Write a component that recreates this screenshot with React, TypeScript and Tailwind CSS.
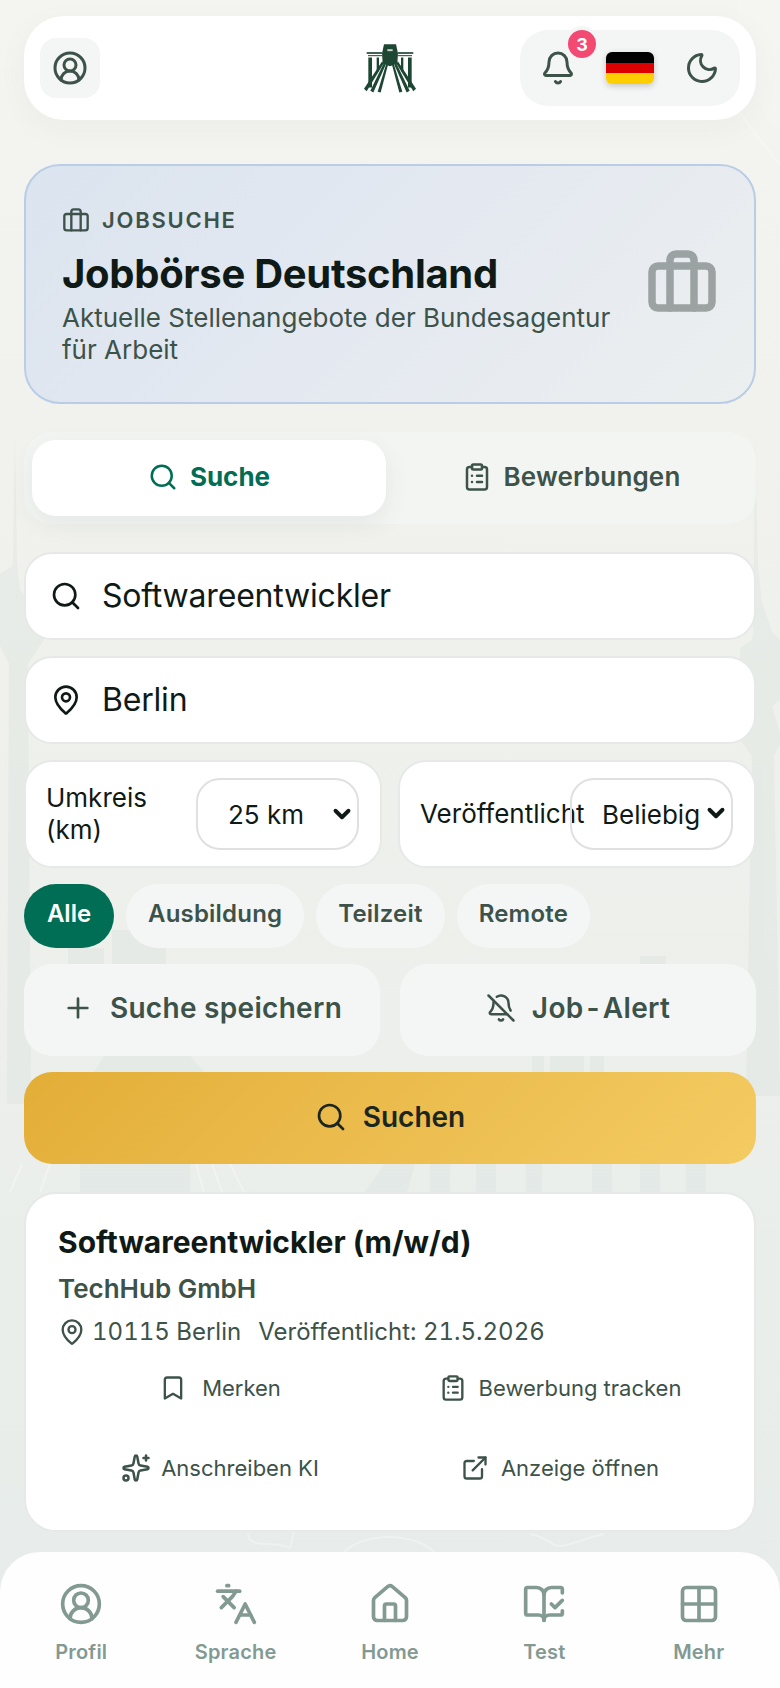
import React from "react";
import {
  Bell,
  BellOff,
  BookOpenCheck,
  Bookmark,
  Briefcase,
  ChevronDown,
  CircleUserRound,
  ClipboardList,
  ExternalLink,
  Grid2x2,
  House,
  Languages,
  MapPin,
  Moon,
  Plus,
  Search,
  Sparkles,
} from "lucide-react";

const navItems = [
  { label: "Profil", icon: CircleUserRound },
  { label: "Sprache", icon: Languages },
  { label: "Home", icon: House },
  { label: "Test", icon: BookOpenCheck },
  { label: "Mehr", icon: Grid2x2 },
];

const chips = ["Ausbildung", "Teilzeit", "Remote"];

function LogoHalf() {
  return (
    <>
      <rect x="8" y="24" width="46" height="5" />
      <rect x="12" y="33" width="42" height="3" />
      <rect x="13" y="40" width="11" height="90" />
      <rect x="38" y="40" width="7" height="42" />
      <path d="M54 52 L59 58 L8 141 L0 134 Z" />
      <path d="M60 56 L65 62 L28 145 L19 140 Z" />
      <path d="M67 58 L73 58 L50 145 L41 143 Z" />
    </>
  );
}

function Logo() {
  return (
    <svg viewBox="0 0 156 146" className="w-[52px] h-[49px]" fill="#1d4633">
      <path d="M60 0H96L102 28L100 58L78 66L56 58L54 28Z" />
      <rect x="70" y="15" width="16" height="6" fill="#ffffff" opacity="0.75" />
      <LogoHalf />
      <g transform="matrix(-1 0 0 1 156 0)">
        <LogoHalf />
      </g>
    </svg>
  );
}

// Faint city scene behind the page
function Skyline() {
  return (
    <svg viewBox="0 0 780 1688" className="absolute inset-0 w-full h-full">
      <g fill="#dbe3df" opacity="0.4">
        <path d="M15 432l2 130 3 28 27 24 3 16-22 34 3 440h-24l2-440-9-18v-72l12-8 1-4z" />
        <path d="M755 436l3 130 4 36 10 30 8 8v60l-8 6 10 34-8 16 6 340h-34l6-340-12-16 4-34-4-6v-52l12-8 1-8z" />
        <rect x="68" y="948" width="36" height="16" />
        <rect x="112" y="930" width="54" height="34" />
        <rect x="640" y="956" width="26" height="8" />
        <path d="M532 1056h12v16h-12zM550 1056h34v16h-34zM590 1056h14v16h-14z" />
        <path d="M104 1056h86l14 16h-110z" />
        <rect x="80" y="1164" width="110" height="28" />
        <path d="M365 1192l20-28h30l-8 28z" />
        <rect x="430" y="1164" width="20" height="28" />
        <rect x="476" y="1164" width="20" height="28" />
        <rect x="526" y="1164" width="16" height="28" />
        <rect x="592" y="1164" width="20" height="28" />
        <rect x="640" y="1164" width="20" height="28" />
        <rect x="686" y="1164" width="20" height="28" />
      </g>
      <g stroke="#ffffff" fill="none" strokeWidth="2" opacity="0.3">
        <path d="M720 80c16 30 40 60 60 85" />
        <path d="M10 1192l12-28M40 1192l10-28M204 1192l-8-28M222 1192l-10-28M244 1192l-14-28" />
        <path d="M344 1552c20-20 70-20 90 0" />
        <path d="M248 1534c0 16 30 6 42 14 2-6 2-14 6-18" />
        <path d="M530 1534c20 4 20 12 30 12s30-10 44-12" />
      </g>
      <path d="M738 0c-4 60 8 90 42 132V0z" fill="#ffffff" opacity="0.12" />
    </svg>
  );
}

export default function App() {
  return (
    <div className="relative w-[780px] h-[1688px] overflow-hidden bg-gradient-to-b from-[#f4f4f0] via-[#eef0ec] to-[#e6ecea] font-['Inter',sans-serif] text-[#0f1a16]">
      <Skyline />

      <div className="relative flex flex-col px-6 pt-4">
        {/* Header */}
        <header className="flex items-center h-[104px] bg-white rounded-[40px] px-4 shadow-[0_8px_32px_rgba(60,80,70,0.04)]">
          <button
            type="button"
            className="flex items-center justify-center w-[60px] h-[60px] rounded-2xl bg-[#f4f6f5] text-[#3d5249]"
          >
            <CircleUserRound size={36} strokeWidth={2} />
          </button>
          <div className="ml-[264px]">
            <Logo />
          </div>
          <div className="flex items-center gap-[30px] ml-auto h-[76px] rounded-[28px] bg-[#f4f6f5] px-5 text-[#3d5249]">
            <div className="relative">
              <Bell size={36} strokeWidth={2} />
              <span className="absolute -top-[20px] -right-[20px] flex items-center justify-center w-[28px] h-[28px] rounded-full bg-[#f24a72] text-white text-[18px] font-bold shadow-[0_0_0_4px_#f4f6f5]">
                3
              </span>
            </div>
            <div className="flex flex-col w-[48px] h-[32px] rounded-md overflow-hidden shadow-[0_2px_6px_rgba(0,0,0,0.2)]">
              <div className="flex-1 bg-black" />
              <div className="flex-1 bg-[#dd0000]" />
              <div className="flex-1 bg-[#ffce00]" />
            </div>
            <Moon size={36} strokeWidth={2} />
          </div>
        </header>

        {/* Hero */}
        <section className="flex items-center justify-between mt-11 h-[240px] rounded-[36px] border-2 border-[#b9cde6] bg-linear-135 from-[#dbe4ef] via-[#e4e9f1] to-[#ecefef] px-[36px]">
          <div className="w-[552px] pt-[2px]">
            <div className="flex items-center gap-3 text-[#3d5249]">
              <Briefcase size={28} strokeWidth={2} />
              <span className="text-[22px] font-semibold tracking-[1.76px]">JOBSUCHE</span>
            </div>
            <h1 className="mt-[13px] text-[40px] leading-[48px] font-bold tracking-[-0.3px] text-[#0f1a16]">
              Jobbörse Deutschland
            </h1>
            <p className="mt-[4px] text-[26px] leading-[32px] text-[#3d5249]">
              Aktuelle Stellenangebote der Bundesagentur für Arbeit
            </p>
          </div>
          <Briefcase size={72} strokeWidth={2.5} className="text-[#0f1a16] opacity-35" />
        </section>

        {/* Tabs */}
        <div className="flex gap-2 mt-[28px] h-[92px] rounded-[28px] bg-[#f4f6f5]/70 p-2">
          <button
            type="button"
            className="flex items-center justify-center gap-3 w-[354px] pb-[3px] rounded-[24px] bg-white text-[#006e54] text-[26px] font-bold shadow-[0_8px_24px_rgba(60,80,70,0.08)]"
          >
            <Search size={30} strokeWidth={2} />
            Suche
          </button>
          <button
            type="button"
            className="flex flex-1 items-center justify-center gap-3 pb-[3px] text-[#3d5249] text-[26px] font-semibold tracking-[0.15px]"
          >
            <ClipboardList size={30} strokeWidth={2} />
            Bewerbungen
          </button>
        </div>

        {/* Search fields */}
        <div className="flex flex-col mt-[28px] gap-[16px]">
          <label className="flex items-center gap-[20px] h-[88px] rounded-[28px] border-2 border-[#e6e9e7] bg-white pl-[24px]">
            <Search size={32} strokeWidth={2} className="shrink-0" />
            <input
              defaultValue="Softwareentwickler"
              className="flex-1 bg-transparent text-[32px] tracking-[-0.2px] outline-none"
            />
          </label>
          <label className="flex items-center gap-[20px] h-[88px] rounded-[28px] border-2 border-[#e6e9e7] bg-white pl-[24px]">
            <MapPin size={32} strokeWidth={2} className="shrink-0" />
            <input
              defaultValue="Berlin"
              className="flex-1 bg-transparent text-[32px] tracking-[-0.2px] outline-none"
            />
          </label>
          <div className="grid grid-cols-2 gap-[16px]">
            <div className="flex items-center justify-between h-[108px] rounded-[28px] border-2 border-[#e6e9e7] bg-white pl-[20px] pr-[21px]">
              <span className="text-[26px] leading-[32px] w-[120px]">Umkreis (km)</span>
              <div className="relative">
                <select
                  defaultValue="25"
                  className="block w-[163px] h-[72px] appearance-none rounded-[24px] border-2 border-[#dfe1e0] bg-transparent pl-[30px] text-[26px] outline-none"
                >
                  <option value="25">25 km</option>
                </select>
                <ChevronDown
                  size={26}
                  strokeWidth={3.6}
                  className="absolute right-[4px] top-[23px] pointer-events-none"
                />
              </div>
            </div>
            <div className="flex items-center justify-between h-[108px] rounded-[28px] border-2 border-[#e6e9e7] bg-white pl-[20px] pr-[21px]">
              <span className="text-[26px] leading-[32px] -mr-[20px]">Veröffentlicht</span>
              <div className="relative">
                <select
                  defaultValue="any"
                  className="block w-[163px] h-[72px] appearance-none rounded-[24px] border-2 border-[#dfe1e0] bg-transparent pl-[30px] text-[26px] outline-none"
                >
                  <option value="any">Beliebig</option>
                </select>
                <ChevronDown
                  size={26}
                  strokeWidth={3.6}
                  className="absolute right-[4px] top-[22px] pointer-events-none"
                />
              </div>
            </div>
          </div>
        </div>

        {/* Chips */}
        <div className="flex mt-[16px] gap-[12px]">
          <button
            type="button"
            className="h-[64px] w-[90px] pb-[5px] rounded-[32px] bg-[#006e54] text-white text-[24px] font-semibold"
          >
            Alle
          </button>
          {chips.map((chip) => (
            <button
              key={chip}
              type="button"
              className="h-[64px] px-[22px] pb-[5px] rounded-[32px] bg-[#f4f6f5] text-[#3d5249] text-[24px] font-semibold tracking-[0.2px]"
            >
              {chip}
            </button>
          ))}
        </div>

        {/* Actions */}
        <div className="grid grid-cols-2 gap-[20px] mt-[16px]">
          <button
            type="button"
            className="flex items-center justify-center gap-[16px] h-[92px] pb-[4px] rounded-[28px] bg-[#f4f6f5] text-[#3d5249] text-[28px] font-semibold tracking-[0.3px]"
          >
            <Plus size={32} strokeWidth={2} />
            Suche speichern
          </button>
          <button
            type="button"
            className="flex items-center justify-center gap-[16px] h-[92px] pb-[4px] rounded-[28px] bg-[#f4f6f5] text-[#3d5249] text-[28px] font-semibold tracking-[0.3px]"
          >
            <BellOff size={30} strokeWidth={2} />
            <span>
              Job<span className="px-[3px]">-</span>Alert
            </span>
          </button>
        </div>

        <button
          type="button"
          className="flex items-center justify-center gap-[16px] mt-[16px] h-[92px] pb-[3px] rounded-[28px] bg-linear-135 from-[#e3ae37] to-[#f4cb62] text-[#1c2620] text-[28px] font-semibold"
        >
          <Search size={32} strokeWidth={2} />
          Suchen
        </button>

        {/* Result card */}
        <article className="mt-[28px] h-[340px] rounded-[32px] border-2 border-[#e6e9e7] bg-white px-[32px] pt-[28px]">
          <h2 className="text-[30px] leading-[40px] font-bold">Softwareentwickler (m/w/d)</h2>
          <p className="mt-[9px] text-[26px] leading-[36px] font-semibold text-[#3d5249]">TechHub GmbH</p>
          <div className="flex items-center mt-[9px] text-[24px] leading-[32px] text-[#3d5249] tabular-nums">
            <MapPin size={28} strokeWidth={2} className="mr-[6px]" />
            <span>10115 Berlin</span>
            <span className="ml-[17px]">Veröffentlicht: 21.5.2026</span>
          </div>
          <div className="grid grid-cols-2 gap-x-2 -mx-[4px] text-[22px] text-[#3d5249]">
            <button type="button" className="flex items-center justify-center gap-[15px] h-[80px]">
              <Bookmark size={28} strokeWidth={2} />
              Merken
            </button>
            <button type="button" className="flex items-center justify-center gap-[12px] h-[80px]">
              <ClipboardList size={28} strokeWidth={2} />
              Bewerbung tracken
            </button>
            <button type="button" className="flex items-center justify-center gap-[10px] h-[80px]">
              <Sparkles size={30} strokeWidth={2} />
              Anschreiben KI
            </button>
            <button type="button" className="flex items-center justify-center gap-[12px] h-[80px]">
              <ExternalLink size={28} strokeWidth={2} />
              Anzeige öffnen
            </button>
          </div>
        </article>
      </div>

      {/* Bottom navigation */}
      <nav className="absolute bottom-0 left-0 right-0 flex h-[136px] rounded-t-[40px] bg-white/95 pt-[30px] px-[4px]">
        {navItems.map(({ label, icon: Icon }) => (
          <button
            key={label}
            type="button"
            className="flex flex-1 flex-col items-center text-[#839a93] text-[20px] font-semibold tracking-[0.2px]"
          >
            <Icon size={44} strokeWidth={2} />
            <span className="mt-[11px]">{label}</span>
          </button>
        ))}
      </nav>
    </div>
  );
}
